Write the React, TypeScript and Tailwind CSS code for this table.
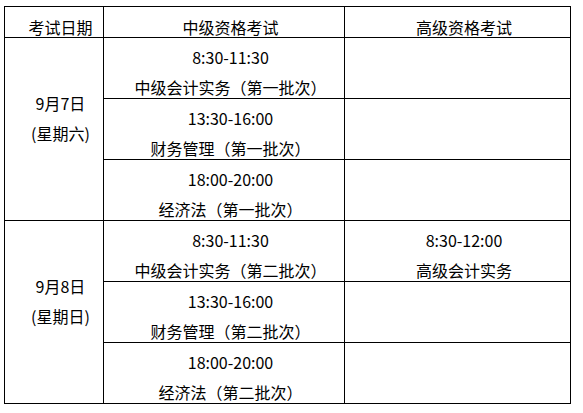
import React from "react";

type Lines = string[];

const font = { fontFamily: '"Noto Sans CJK SC", "Noto Sans", sans-serif' };

function Sub({ lines }: { lines?: Lines }) {
  return (
    <div className="border-r border-b border-black flex flex-col items-center pt-[4px] pl-[13px] text-[16px] leading-[30px] text-black whitespace-nowrap">
      {lines?.map((l, i) => (
        <div key={i}>{l}</div>
      ))}
    </div>
  );
}

function Day({ date, week }: { date: string; week: string }) {
  return (
    <div className="row-span-3 border-r border-b border-black flex flex-col items-center justify-center pb-[22px] pl-[13px] text-[16px] leading-[30px] text-black whitespace-nowrap">
      <div>{date}</div>
      <div>{week}</div>
    </div>
  );
}

function Head({ text }: { text: string }) {
  return (
    <div className="border-r border-b border-black flex justify-center pt-[10px] pl-[13px] text-[16px] leading-[20px] text-black whitespace-nowrap">
      {text}
    </div>
  );
}

export default function App() {
  const day1: Lines[] = [
    ["8:30-11:30", "中级会计实务（第一批次）"],
    ["13:30-16:00", "财务管理（第一批次）"],
    ["18:00-20:00", "经济法（第一批次）"],
  ];
  const day2: Lines[] = [
    ["8:30-11:30", "中级会计实务（第二批次）"],
    ["13:30-16:00", "财务管理（第二批次）"],
    ["18:00-20:00", "经济法（第二批次）"],
  ];
  const high2: (Lines | undefined)[] = [["8:30-12:00", "高级会计实务"], undefined, undefined];
  return (
    <div className="w-[583px] h-[413px] bg-white overflow-hidden pt-[6px] pl-[4px]" style={font}>
      <div className="w-[567px] border-l border-t border-black grid grid-cols-[99px_241px_226px] grid-rows-[31px_61px_61px_61px_61px_61px_61px]">
        <Head text="考试日期" />
        <Head text="中级资格考试" />
        <Head text="高级资格考试" />
        <Day date="9月7日" week="(星期六)" />
        {day1.map((l, i) => (
          <React.Fragment key={"a" + i}>
            <Sub lines={l} />
            <Sub />
          </React.Fragment>
        ))}
        <Day date="9月8日" week="(星期日)" />
        {day2.map((l, i) => (
          <React.Fragment key={"b" + i}>
            <Sub lines={l} />
            <Sub lines={high2[i]} />
          </React.Fragment>
        ))}
      </div>
    </div>
  );
}
